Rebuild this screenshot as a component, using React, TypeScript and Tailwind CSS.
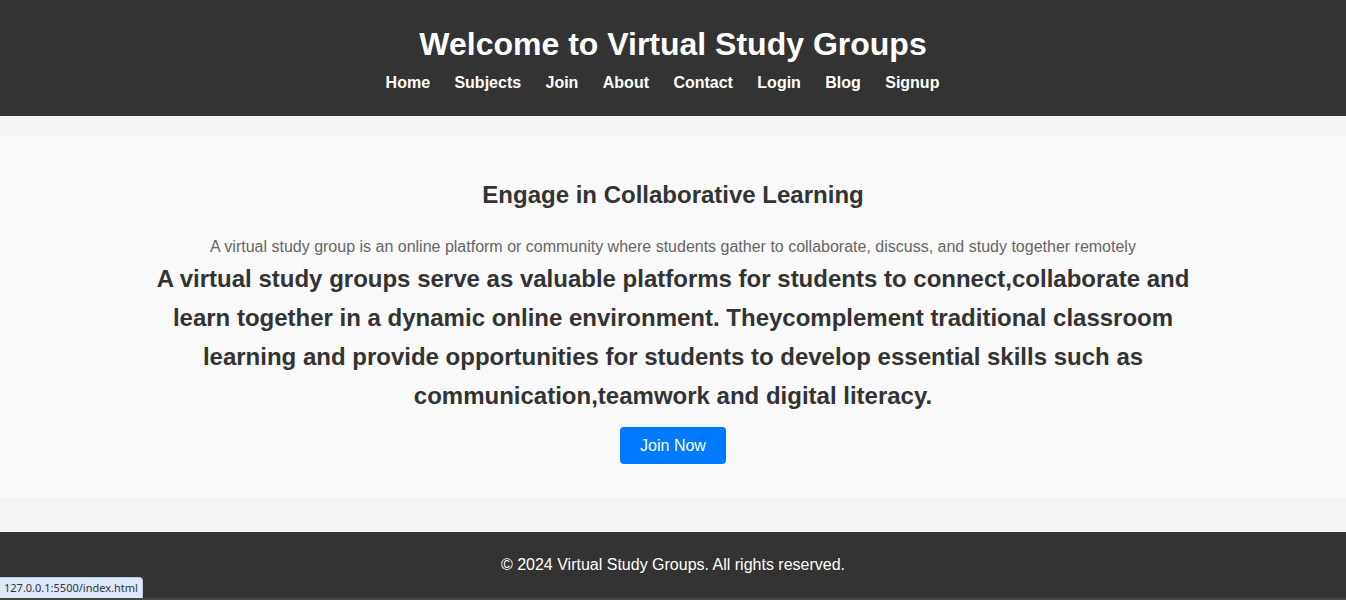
import React from "react";

const links = ["Home", "Subjects", "Join", "About", "Contact", "Login", "Blog", "Signup"];

export default function App() {
  return (
    <div className="min-h-[600px] bg-[#f4f4f4] font-['Liberation_Sans',Arial,sans-serif] text-[#333]">
      <header className="bg-[#333] pt-[26px] pb-[24px] text-center text-white">
        <h1 className="text-[32px] font-bold leading-[37px]">Welcome to Virtual Study Groups</h1>
        <nav className="mt-[11px] flex justify-center gap-[24.4px] pr-[21px] text-[16px] font-bold leading-[18px]">
          {links.map((l) => (
            <a key={l} href="#" className="text-white">
              {l}
            </a>
          ))}
        </nav>
      </header>

      <section className="mt-[20px] bg-[#f9f9f9] h-[362px] pt-[45px] text-center">
        <h2 className="text-[24px] font-bold leading-[28px] text-[#333]">Engage in Collaborative Learning</h2>
        <p className="mt-[29px] text-[16px] leading-[18px] text-[#666]">
          A virtual study group is an online platform or community where students gather to collaborate, discuss, and
          study together remotely
        </p>
        <p className="mx-auto mt-[3px] max-w-[1060px] text-[24px] font-bold leading-[39px] text-[#333]">
          A virtual study groups serve as valuable platforms for students to connect,collaborate and learn together in
          a dynamic online environment. Theycomplement traditional classroom learning and provide opportunities for
          students to develop essential skills such as communication,teamwork and digital literacy.
        </p>
        <button className="mt-[12px] h-[37px] rounded-[4px] bg-[#007bff] px-[20px] text-[16px] text-white">
          Join Now
        </button>
      </section>

      <footer className="mt-[34px] h-[68px] border-b-[2px] border-[#474747] bg-[#333] pt-[24px] text-center text-[16px] leading-[18px] text-white">
        © 2024 Virtual Study Groups. All rights reserved.
      </footer>

      <div className="fixed bottom-[2px] left-0 h-[21px] rounded-tr-[4px] border-t border-r border-[#bcc9dc] bg-[#dde8fb] px-[4px] font-['Noto_Sans',sans-serif] text-[11px] leading-[20px] text-[#333]">
        127.0.0.1:5500/index.html
      </div>
    </div>
  );
}
